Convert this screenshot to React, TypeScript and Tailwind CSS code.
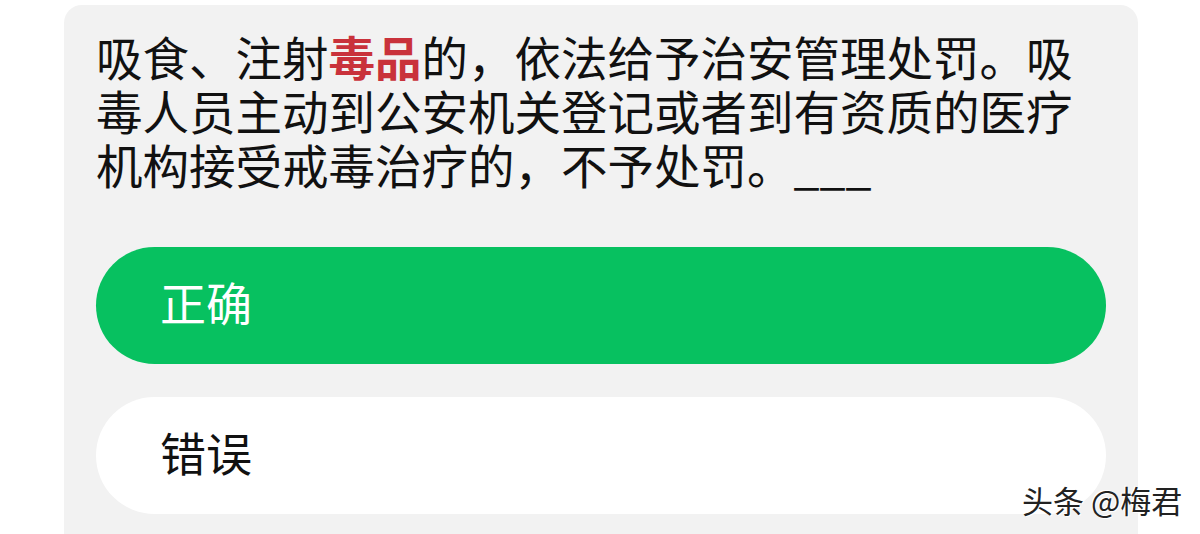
export default function App() {
  const font = { fontFamily: '"Noto Sans CJK SC", "Noto Sans", sans-serif' };
  return (
    <div className="relative h-[534px] w-[1200px] overflow-hidden bg-white" style={font}>
      <div className="ml-[64px] mt-[5px] h-[600px] w-[1074px] rounded-[18px] bg-[#f2f2f2] px-[32px] pt-[24px]">
        <div className="text-[46.5px] leading-[54px] text-[#111]">
          <div>
            吸食、注射<span className="font-bold text-[#c9323b]">毒品</span>的，依法给予治安管理处罚。吸
          </div>
          <div>毒人员主动到公安机关登记或者到有资质的医疗</div>
          <div>机构接受戒毒治疗的，不予处罚。___</div>
        </div>
        <div className="mt-[56px] flex h-[117px] items-center rounded-full bg-[#07c160] pb-[8px] pl-[64px] text-[46px] text-white">
          正确
        </div>
        <div className="mt-[33px] flex h-[117px] items-center rounded-full bg-white pb-[8px] pl-[64px] text-[46px] text-[#111]">
          错误
        </div>
      </div>
      <div className="absolute left-[1022px] top-[479px] text-[31px] leading-[42px] text-[#222] [text-shadow:1px_1px_0_#fff,-1px_-1px_0_#fff]">
        头条 @梅君
      </div>
    </div>
  );
}
